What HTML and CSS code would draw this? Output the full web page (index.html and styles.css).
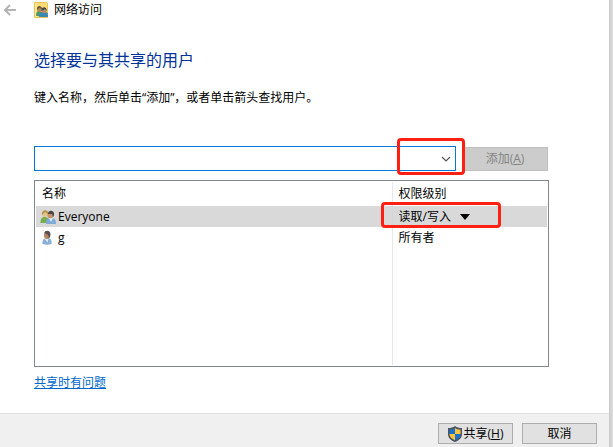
FILE: index.html
```html
<!DOCTYPE html>
<html lang="zh-CN">
<head>
	<meta charset="UTF-8">
	<title>网络访问</title>
	<link rel="stylesheet" href="styles.css">
</head>
<body>
	<div class="dialog">
		<header class="titlebar">
			<button class="back" type="button" aria-label="后退">
				<svg width="14" height="14" viewBox="0 0 14 14"><path d="M13 7H2M7 2L2 7l5 5" fill="none" stroke="#b4b4b4" stroke-width="2"/></svg>
			</button>
			<svg class="title-icon" width="15" height="17" viewBox="0 0 15 17">
				<path d="M0.500 0.500h12l1 1v14H0.500z" fill="#f8dc78" stroke="#e8c34f"/>
				<path d="M1 1h2v14H1z" fill="#fbe799"/>
				<path d="M2 14c0-4 1-5 3-5s4 1 4 5z" fill="#4f9a6a"/>
				<circle cx="5.500" cy="7.500" r="2.500" fill="#b98a55"/>
				<path d="M3 8c-1-5 5-5 5-1L5 6z" fill="#6b5a3c"/>
				<path d="M5 15c0-4 1-5 5-5s4 1 4 5z" fill="#3d8ab0"/>
				<circle cx="10" cy="8.500" r="2.500" fill="#b98d68"/>
				<path d="M7.500 9c-1-5 6-5 5 0L11 7z" fill="#3f4a48"/>
			</svg>
			<span>网络访问</span>
		</header>

		<main class="content">
			<h1>选择要与其共享的用户</h1>
			<label class="hint" for="user">键入名称，然后单击“添加”，或者单击箭头查找用户。</label>

			<div class="add-row">
				<div class="combo">
					<input id="user" type="text">
					<button class="combo-arrow" type="button" aria-label="查找用户">
						<svg width="10" height="6" viewBox="0 0 10 6"><path d="M1 1l4 4 4-4" fill="none" stroke="#555" stroke-width="1.200"/></svg>
					</button>
					<span class="mark mark-combo"></span>
				</div>
				<button class="btn add" type="button" disabled>添加(<u>A</u>)</button>
			</div>

			<div class="list">
				<table>
					<thead>
						<tr><th>名称</th><th class="access">权限级别</th></tr>
					</thead>
					<tbody>
						<tr class="active">
							<td>
								<div class="cell">
									<svg width="16" height="16" viewBox="0 0 16 16">
										<path d="M0.500 14c0-4 1-6 4-6s5 2 5 6z" fill="#79ad50"/>
										<circle cx="5" cy="5" r="3" fill="#e2c58c"/>
										<path d="M2 6C1 0 9 0 8 5L5 3z" fill="#b29348"/>
										<path d="M6 15c0-4 1-6 5-6s5 2 5 6z" fill="#7fabd8"/>
										<path d="M9 9h4l-2 4z" fill="#dcecf8"/>
										<circle cx="10.500" cy="6" r="3.200" fill="#c9946b"/>
										<path d="M8 5c0-5 7-4 6 1l-1 2-1-3z" fill="#4a4543"/>
									</svg>
									<span>Everyone</span>
								</div>
							</td>
							<td>
								<div class="level">
									<select aria-label="权限级别">
										<option>读取</option>
										<option selected>读取/写入</option>
									</select>
									<svg width="10" height="6" viewBox="0 0 10 6"><path d="M0 0h10L5 6z" fill="#000"/></svg>
									<span class="mark mark-level"></span>
								</div>
							</td>
						</tr>
						<tr>
							<td>
								<div class="cell">
									<svg width="16" height="16" viewBox="0 0 16 16">
										<path d="M2.500 14c-0.500-4 1-6 4.500-6s5 2 4.500 6q-4.500 1.500-9 0z" fill="#8aafd8"/>
										<path d="M4.500 8.500h4l-1 4z" fill="#dfedf8"/>
										<ellipse cx="7" cy="5" rx="3" ry="4" fill="#b58563"/>
										<path d="M4.500 3C5 0 10 0 10.500 4c0 2-0.500 3-1.500 4.500C9 6 8 4 4.500 3z" fill="#57504c"/>
									</svg>
									<span>g</span>
								</div>
							</td>
							<td>所有者</td>
						</tr>
						<tr class="rest"><td></td><td></td></tr>
					</tbody>
				</table>
			</div>

			<a class="help" href="#">共享时有问题</a>
		</main>

		<footer class="footer">
			<button class="btn" type="button">
				<svg width="14" height="16" viewBox="0 0 14 16">
					<path d="M7 0C5 1.500 3 2 0 2V8c0 4 3 6.500 7 8 4-1.500 7-4 7-8V2C11 2 9 1.500 7 0z" fill="#4c5560"/>
					<path d="M7 2C5.500 3 4 3.500 1.500 3.800V8H7z" fill="#1673d0"/>
					<path d="M7 2c1.500 1 3 1.500 5.500 1.800V8H7z" fill="#fdc33a"/>
					<path d="M1.500 8H7v6.200C4 12.800 1.500 11 1.500 8z" fill="#fdc33a"/>
					<path d="M12.500 8H7v6.200c3-1.400 5.500-3.200 5.500-6.200z" fill="#1673d0"/>
				</svg>
				<span>共享(<u>H</u>)</span>
			</button>
			<button class="btn" type="button">取消</button>
		</footer>
	</div>
</body>
</html>
```
FILE: styles.css
```css
*{
	box-sizing:border-box;
}
body{
	margin:0;
	padding-right:4px;
	background:linear-gradient(to left, #e0e0e0, #c8c8c8 4px);
	color:#000;
}
body,button,input,select{
	font:12px/16px "Open Sans","Noto Sans CJK SC",sans-serif;
}
button,input,select{
	margin:0;
	padding:0;
	border:none;
	background:none;
	color:inherit;
}
svg{
	display:block;
	flex:none;
}
.dialog{
	display:flex;
	flex-direction:column;
	min-height:100vh;
	background:#fff;
}
.titlebar{
	display:flex;
	align-items:center;
	height:20px;
	padding-left:3px;
}
.title-icon{
	margin:0 5px 0 17px;
}
.content{
	display:flex;
	flex-direction:column;
	align-items:flex-start;
	flex:1;
	padding:28px 60px 20px 34px;
}
h1{
	margin:0 0 16px;
	font-size:16px;
	line-height:24px;
	font-weight:400;
	color:#003399;
}
.hint{
	line-height:20px;
}
.add-row{
	display:flex;
	align-items:center;
	gap:6px;
	width:100%;
	margin:38px 0 9px;
	padding-right:1px;
}
.combo{
	position:relative;
	display:flex;
	flex:1;
	height:25px;
	border:1px solid #0078d7;
}
.combo input{
	flex:1;
	min-width:0;
	padding:0 4px;
	outline:none;
}
.combo-arrow{
	display:flex;
	align-items:center;
	justify-content:center;
	width:18px;
}
/* 红色标注框 */
.mark{
	position:absolute;
	border:3px solid #ff2014;
	border-radius:4px;
	pointer-events:none;
}
.mark-combo{
	top:-9px;
	right:-10px;
	width:68px;
	height:37px;
}
.mark-level{
	top:-7px;
	left:-18px;
	width:120px;
	height:26px;
}
.btn{
	display:flex;
	align-items:center;
	justify-content:center;
	gap:2px;
	width:75px;
	height:21px;
	border:1px solid #adadad;
	background:#e1e1e1;
}
.btn.add{
	display:block;
	width:86px;
	height:24px;
	border-color:#bfbfbf;
	background:#ccc;
	color:#838383;
}
.list{
	width:100%;
	height:187px;
	padding:1px;
	border:1px solid #828790;
}
table{
	width:100%;
	height:100%;
	border-collapse:collapse;
	table-layout:fixed;
}
th,td{
	height:21px;
	padding:0 0 0 6px;
	font-weight:400;
	text-align:left;
}
th{
	height:24px;
}
th.access{
	width:155px;
}
th:first-child,td:first-child{
	border-right:1px solid #e5e8ee;
}
.active{
	background:#d9d9d9;
}
.active td:first-child{
	border-color:#d2d6dc;
}
.rest td{
	height:auto;
}
td:first-child{
	padding-left:4px;
}
.cell{
	display:flex;
	align-items:center;
	gap:2px;
}
.level{
	position:relative;
	display:flex;
	align-items:center;
	gap:8px;
}
.level select{
	appearance:none;
}
.help{
	margin-top:8px;
	color:#0066cc;
}
.footer{
	display:flex;
	justify-content:flex-end;
	gap:9px;
	height:34px;
	padding:9px 12px 0 0;
	border-top:1px solid #dfdfdf;
	background:#f0f0f0;
}
```
